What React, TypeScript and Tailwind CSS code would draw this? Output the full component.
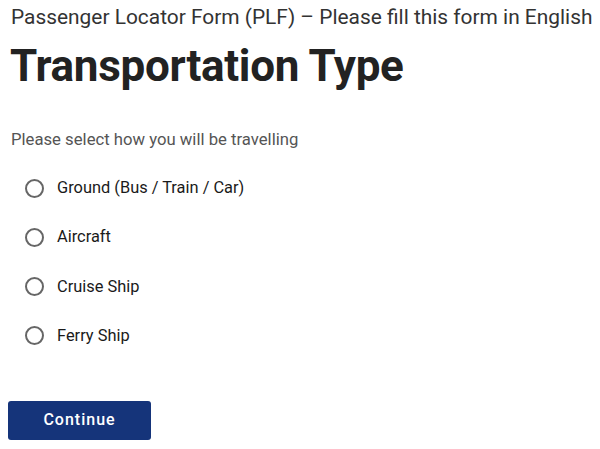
const options = [
  'Ground (Bus / Train / Car)',
  'Aircraft',
  'Cruise Ship',
  'Ferry Ship',
];

export default function App() {
  return (
    <div className="min-h-[449px] w-[600px] bg-white font-['Roboto',sans-serif]">
      <p className="pl-[11px] pt-[3px] text-[20.9px] leading-[28px] text-[#333333]">
        Passenger Locator Form (PLF) – Please fill this form in English
      </p>
      <h1 className="mt-[8px] pl-[10px] text-[44px] leading-[54px] font-bold tracking-[-0.3px] text-[#222222]">
        Transportation Type
      </h1>

      <p className="mt-[35px] pl-[11px] text-[16.7px] leading-[24px] text-[#555555]">
        Please select how you will be travelling
      </p>

      <div className="mt-[24px] flex flex-col gap-[25.3px] pl-[25px]">
        {options.map((opt) => (
          <label key={opt} className="flex items-center gap-[13px] cursor-pointer">
            <span className="h-[19px] w-[19px] rounded-full border-2 border-[#666666] bg-white" />
            <span className="text-[16.4px] leading-[24px] text-[#1a1a1a]">{opt}</span>
          </label>
        ))}
      </div>

      <button
        type="button"
        className="ml-[8px] mt-[53px] h-[39px] w-[143px] rounded-[3px] bg-[#15347a] text-[16px] font-medium tracking-[1px] text-white"
      >
        Continue
      </button>
    </div>
  );
}
